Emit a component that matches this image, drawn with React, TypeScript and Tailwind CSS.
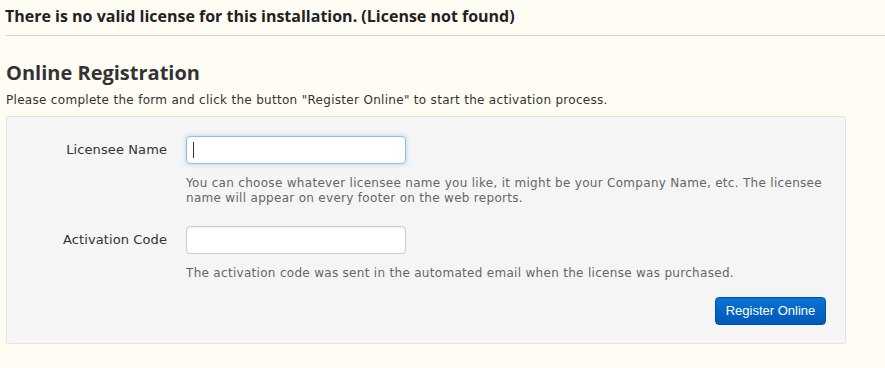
import React from 'react';

const App = () => {
  return (
    <div className="min-h-[368px] w-[885px] bg-[#fffcf4] text-[#333]" style={{ fontFamily: '"DejaVu Sans", Verdana, sans-serif' }}>
      <div className="ml-[6px] flex h-[36px] items-center border-b border-[#d8d4c8] pb-[4px]">
        <h1 className="-ml-px text-[16px] font-bold text-[#222]" style={{ fontFamily: '"Open Sans", sans-serif' }}>
          There is no valid license for this installation. (License not found)
        </h1>
      </div>

      <div className="px-[6px]">
        <h2 className="mt-[23px] text-[20px] leading-[28px] font-bold text-[#333]" style={{ fontFamily: '"Open Sans", sans-serif' }}>
          Online Registration
        </h2>
        <p className="mt-[5px] text-[12px] leading-[16px] tracking-[0.3px] text-[#333]">
          Please complete the form and click the button "Register Online" to start the activation process.
        </p>

        <div className="mt-[8px] w-[840px] rounded-[3px] border border-[#e3e3e3] bg-[#f5f5f5] pl-[20px] pr-[19px] pt-[19px] pb-[18px]">
          <div className="flex items-start gap-[19px]">
            <label className="w-[140px] pt-[7px] text-right text-[13px] leading-[14px] tracking-[0.1px] text-[#333]">Licensee Name</label>
            <div className="flex-1">
              <div className="flex h-[28px] w-[220px] items-center rounded-[4px] border border-[#8fbde6] bg-white px-[6px] shadow-[0_0_5px_rgba(82,168,236,0.45)]">
                <span className="h-[16px] w-px bg-[#333]" />
              </div>
              <p className="mt-[12px] text-[12px] leading-[15px] tracking-[0.3px] text-[#666]">
                You can choose whatever licensee name you like, it might be your Company Name, etc. The licensee name will appear on every footer on the web reports.
              </p>
            </div>
          </div>

          <div className="mt-[20px] flex items-start gap-[19px]">
            <label className="w-[140px] pt-[7px] text-right text-[13px] leading-[14px] tracking-[0.1px] text-[#333]">Activation Code</label>
            <div className="flex-1">
              <div className="h-[28px] w-[220px] rounded-[4px] border border-[#cccccc] bg-white shadow-[inset_0_1px_1px_rgba(0,0,0,0.06)]" />
              <p className="mt-[12px] text-[12px] leading-[15px] tracking-[0.3px] text-[#666]">
                The activation code was sent in the automated email when the license was purchased.
              </p>
            </div>
          </div>

          <div className="mt-[16px] flex justify-end">
            <button
              type="button"
              className="h-[28px] w-[111px] rounded-[4px] border border-[#0052a8] bg-gradient-to-b from-[#0a74d6] to-[#0058b5] text-[13px] text-white"
              style={{ fontFamily: '"Liberation Sans", Arial, sans-serif' }}
            >
              Register Online
            </button>
          </div>
        </div>
      </div>
    </div>
  );
};

export default App;
